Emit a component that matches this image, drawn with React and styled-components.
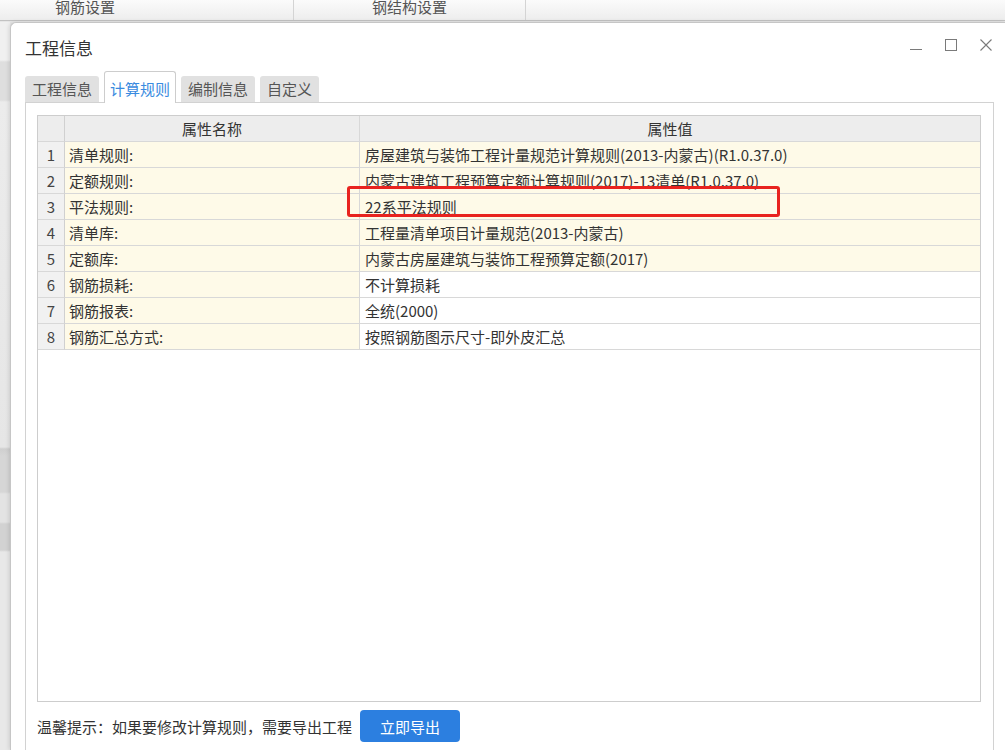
import React from "react";
import styled, { createGlobalStyle } from "styled-components";

const rules = [
  { name: "清单规则:", value: "房屋建筑与装饰工程计量规范计算规则(2013-内蒙古)(R1.0.37.0)", locked: true },
  { name: "定额规则:", value: "内蒙古建筑工程预算定额计算规则(2017)-13清单(R1.0.37.0)", locked: true },
  { name: "平法规则:", value: "22系平法规则", locked: true, marked: true },
  { name: "清单库:", value: "工程量清单项目计量规范(2013-内蒙古)", locked: true },
  { name: "定额库:", value: "内蒙古房屋建筑与装饰工程预算定额(2017)", locked: true },
  { name: "钢筋损耗:", value: "不计算损耗" },
  { name: "钢筋报表:", value: "全统(2000)" },
  { name: "钢筋汇总方式:", value: "按照钢筋图示尺寸-即外皮汇总" },
];

const tabs = ["工程信息", "计算规则", "编制信息", "自定义"];

const App = () => {
  return (
    <>
      <GlobalStyle />
      <Page>
        <TopBar>
          <TopTab $pad="0 0 0 55px" $width="293px">钢筋设置</TopTab>
          <TopTab $center $width="232px">钢结构设置</TopTab>
          <TopTab />
        </TopBar>
        <Desk>
          <SideStrip />
          <Dialog>
            <TitleBar>
              <Title>工程信息</Title>
              <Controls>
                <svg width="12" height="12" viewBox="0 0 12 12">
                  <line x1="0" y1="10.5" x2="12" y2="10.5" stroke="#7a7a7a" strokeWidth="1" />
                </svg>
                <svg width="12" height="12" viewBox="0 0 12 12">
                  <rect x="0.5" y="0.5" width="11" height="11" fill="none" stroke="#7a7a7a" strokeWidth="1" />
                </svg>
                <svg width="12" height="12" viewBox="0 0 12 12">
                  <path d="M0.5 0.5 L11.5 11.5 M11.5 0.5 L0.5 11.5" stroke="#7a7a7a" strokeWidth="1.1" />
                </svg>
              </Controls>
            </TitleBar>
            <TabBar>
              {tabs.map((t) => (
                <Tab key={t} $active={t === "计算规则"}>
                  {t}
                </Tab>
              ))}
            </TabBar>
            <Panel>
              <Table>
                <Row>
                  <NumCell $head />
                  <Cell $head>属性名称</Cell>
                  <Cell $head>属性值</Cell>
                </Row>
                {rules.map((r, i) => (
                  <Row key={r.name}>
                    <NumCell>{i + 1}</NumCell>
                    <Cell $yellow>{r.name}</Cell>
                    <Cell $yellow={r.locked}>
                      {r.value}
                      {r.marked && <Mark />}
                    </Cell>
                  </Row>
                ))}
              </Table>
              <Footer>
                <Hint>温馨提示：如果要修改计算规则，需要导出工程</Hint>
                <ExportButton>立即导出</ExportButton>
              </Footer>
            </Panel>
          </Dialog>
        </Desk>
      </Page>
    </>
  );
};

const GlobalStyle = createGlobalStyle`
  html, body {
    margin: 0;
    padding: 0;
  }
  body {
    font-family: "Noto Sans CJK SC", "Microsoft YaHei", sans-serif;
    font-size: 15px;
    color: #333;
    background: #e6e6e6;
  }
  * {
    box-sizing: border-box;
  }
`;

const Page = styled.div`
  width: 1005px;
  height: 750px;
  overflow: hidden;
  display: flex;
  flex-direction: column;
  background: #e6e6e6;
`;

const TopBar = styled.div`
  height: 21px;
  flex-shrink: 0;
  display: flex;
  background: linear-gradient(#fbfbfb, #ededed);
  border-bottom: 1px solid #c2c2c2;
`;

const TopTab = styled.div`
  width: ${(p) => p.$width || "auto"};
  flex: ${(p) => (p.$width ? "none" : 1)};
  padding: ${(p) => p.$pad || 0};
  display: flex;
  align-items: flex-end;
  justify-content: ${(p) => (p.$center ? "center" : "flex-start")};
  padding-bottom: 6px;
  line-height: 15px;
  overflow: hidden;
  color: #555;
  & + & {
    border-left: 1px solid #d4d4d4;
  }
`;

const Desk = styled.div`
  flex: 1;
  display: flex;
  margin-top: 1px;
  min-height: 0;
`;

const SideStrip = styled.div`
  width: 10px;
  flex-shrink: 0;
  background: linear-gradient(
    #f0f0f0 0px,
    #f0f0f0 38px,
    #dedede 40px,
    #dedede 78px,
    #ececec 80px,
    #e6e6e6 425px,
    #cfcfcf 427px,
    #d6d6d6 434px,
    #d6d6d6 470px,
    #e3e3e3 472px,
    #e3e3e3 500px,
    #d2d2d2 502px,
    #d2d2d2 528px,
    #e8e8e8 530px
  );
`;

const Dialog = styled.div`
  flex: 1;
  display: flex;
  flex-direction: column;
  background: #fff;
  border-top: 1px solid #c6c6c6;
  border-left: 1px solid #c6c6c6;
  border-top-left-radius: 6px;
  box-shadow: -1px 0 4px rgba(0, 0, 0, 0.12);
  min-height: 0;
`;

const TitleBar = styled.div`
  height: 48px;
  flex-shrink: 0;
  display: flex;
  align-items: center;
  justify-content: space-between;
  padding-left: 14px;
`;

const Title = styled.div`
  font-size: 17px;
  color: #333;
`;

const Controls = styled.div`
  display: flex;
  gap: 23px;
  padding-right: 13px;
  align-self: flex-start;
  margin-top: 16px;
  svg {
    display: block;
  }
`;

const TabBar = styled.div`
  height: 31px;
  flex-shrink: 0;
  display: flex;
  align-items: flex-end;
  gap: 5px;
  padding-left: 14px;
`;

const Tab = styled.div`
  position: relative;
  z-index: 1;
  height: ${(p) => (p.$active ? "32px" : "26px")};
  margin-bottom: ${(p) => (p.$active ? "-1px" : "0")};
  padding: ${(p) => (p.$active ? "4px 5px 0" : "0 7px")};
  line-height: 26px;
  border-radius: 3px 3px 0 0;
  background: ${(p) => (p.$active ? "#fff" : "#e1e1e1")};
  border: ${(p) => (p.$active ? "1px solid #cdcdcd" : "none")};
  border-bottom: none;
  color: ${(p) => (p.$active ? "#3a8be0" : "#555")};
`;

const Panel = styled.div`
  flex: 1;
  display: flex;
  flex-direction: column;
  margin: 0 11px 0 14px;
  padding: 12px 12px 0 11px;
  border: 1px solid #d2d2d2;
  border-bottom: none;
  min-height: 0;
`;

const Table = styled.div`
  flex: 1;
  border: 1px solid #cdcdcd;
  background: #fff;
  min-height: 0;
`;

const Row = styled.div`
  display: grid;
  grid-template-columns: 27px 295px 1fr;
  height: 26px;
`;

const Cell = styled.div`
  position: relative;
  padding-left: ${(p) => (p.$head ? 0 : "4px")};
  text-align: ${(p) => (p.$head ? "center" : "left")};
  line-height: 25px;
  white-space: nowrap;
  border-right: 1px solid #d8d8d8;
  border-bottom: 1px solid #d8d8d8;
  background: ${(p) => (p.$head ? "#ededed" : p.$yellow ? "#fefae8" : "#fff")};
  color: #333;
  &:last-child {
    border-right: none;
    padding-left: ${(p) => (p.$head ? 0 : "5px")};
  }
`;

const NumCell = styled.div`
  text-align: center;
  line-height: 25px;
  border-right: 1px solid #d0d0d0;
  border-bottom: 1px solid #d8d8d8;
  background: ${(p) => (p.$head ? "#ededed" : "#f1f1f1")};
  color: #444;
`;

const Mark = styled.div`
  position: absolute;
  left: -13px;
  top: -8px;
  width: 433px;
  height: 31px;
  border: 3px solid #e8231f;
  border-radius: 3px;
  pointer-events: none;
`;

const Footer = styled.div`
  height: 48px;
  flex-shrink: 0;
  display: flex;
  align-items: center;
  gap: 8px;
`;

const Hint = styled.span`
  color: #333;
`;

const ExportButton = styled.button`
  width: 100px;
  height: 32px;
  border: none;
  border-radius: 4px;
  background: #2c7fe0;
  color: #fff;
  font-family: inherit;
  font-size: 15px;
  cursor: pointer;
`;

export default App;
